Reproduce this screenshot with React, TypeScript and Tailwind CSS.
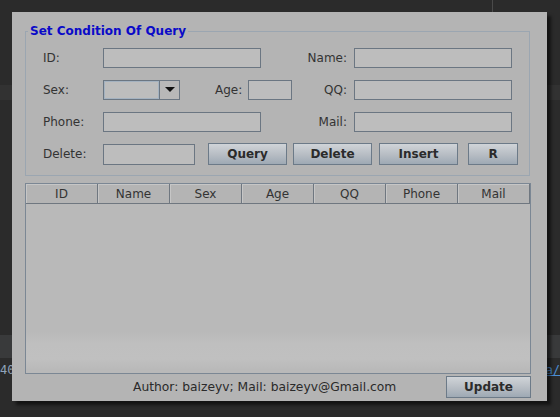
import React from "react";

// Swing-style "Set Condition Of Query" dialog over a dark IDE background

const labelCls = "text-[12px] text-[#333] font-['DejaVu_Sans',sans-serif]";
const fieldCls = "h-[20px] bg-[#bdbdbd] border border-[#6b7682] shrink-0";
const btnCls =
  "h-[22px] shrink-0 border border-[#6c7a88] bg-[linear-gradient(to_bottom,#d0d4d8,#b6bcc3_55%,#9ea9b4)] text-[12px] font-bold text-[#2b2b2b] font-['DejaVu_Sans',sans-serif] flex items-center justify-center";

function Field({ w }: { w: string }) {
  return <div className={`${fieldCls} ${w}`} />;
}

function Combo() {
  return (
    <div className="flex h-[20px] w-[77px] shrink-0 border border-[#6b7682] bg-[#bdbdbd]">
      <div className="flex-1 border border-[#a4b2c0]" />
      <div className="w-[20px] border-l border-[#6b7682] bg-[#b8b8b8] flex items-center justify-center">
        <svg width="10" height="6" viewBox="0 0 10 6">
          <path d="M0 0h10L5 5z" fill="#111" />
        </svg>
      </div>
    </div>
  );
}

const columns = ["ID", "Name", "Sex", "Age", "QQ", "Phone", "Mail"];

function Dialog() {
  return (
    <div className="absolute left-[12px] top-[12px] w-[535px] h-[389px] bg-[#b4b4b4] shadow-[4px_4px_3px_rgba(0,0,0,0.55)] pl-[13px] pt-[19px] flex flex-col">
      {/* condition group */}
      <div className="relative w-[505px] h-[145px] border border-[#9ba6b1] pt-[16px] pl-[17px] pr-[17px] flex flex-col">
        <span className="absolute -top-[9px] left-[2px] px-[2px] bg-[#b4b4b4] text-[12px] leading-[16px] font-bold text-[#0a0ac8] font-['DejaVu_Sans',sans-serif]">
          Set Condition Of Query
        </span>

        <div className="flex items-center h-[20px]">
          <span className={`${labelCls} w-[60px] shrink-0`}>ID:</span>
          <Field w="w-[158px]" />
          <span className={`${labelCls} flex-1 text-right pr-[7px]`}>Name:</span>
          <Field w="w-[158px]" />
        </div>

        <div className="flex items-center h-[20px] mt-[12px]">
          <span className={`${labelCls} w-[60px] shrink-0`}>Sex:</span>
          <Combo />
          <span className={`${labelCls} ml-[35px] w-[33px] shrink-0`}>Age:</span>
          <Field w="w-[44px]" />
          <span className={`${labelCls} flex-1 text-right pr-[7px]`}>QQ:</span>
          <Field w="w-[158px]" />
        </div>

        <div className="flex items-center h-[20px] mt-[12px]">
          <span className={`${labelCls} w-[60px] shrink-0`}>Phone:</span>
          <Field w="w-[158px]" />
          <span className={`${labelCls} flex-1 text-right pr-[7px]`}>Mail:</span>
          <Field w="w-[158px]" />
        </div>

        <div className="flex items-center h-[22px] mt-[11px]">
          <span className={`${labelCls} w-[60px] shrink-0`}>Delete:</span>
          <div className={`${fieldCls} w-[92px] h-[21px]`} />
          <button className={`${btnCls} w-[79px] ml-[13px]`}>Query</button>
          <button className={`${btnCls} w-[79px] ml-[6px]`}>Delete</button>
          <button className={`${btnCls} w-[79px] ml-[7px]`}>Insert</button>
          <button className={`${btnCls} w-[50px] ml-[10px]`}>R</button>
        </div>
      </div>

      {/* result table */}
      <div className="mt-[7px] w-[506px] h-[191px] border border-[#7b8794] flex flex-col">
        <div className="flex h-[20px] shrink-0 border-b border-[#6f7780]">
          {columns.map((c) => (
            <div
              key={c}
              className={`w-[72px] shrink-0 border-r border-[#6f7780] shadow-[inset_1px_1px_0_#c6c6c6] bg-[#b4b4b4] flex items-center justify-center ${labelCls}`}
            >
              {c}
            </div>
          ))}
        </div>
        <div className="flex-1 bg-[linear-gradient(to_bottom,#b9b9b9_0,#b9b9b9_128px,#bfbfbf_140px,#c0c0c0_155px,#b9b9b9_166px)]" />
      </div>

      {/* footer */}
      <div className="flex items-center mt-[3px] h-[20px]">
        <span className="ml-[108px] text-[12.3px] text-[#2a2a2a] font-['DejaVu_Sans',sans-serif]">
          Author: baizeyv; Mail: baizeyv@Gmail.com
        </span>
        <button className={`${btnCls} h-[20px] w-[85px] ml-auto mr-[16px]`}>Update</button>
      </div>
    </div>
  );
}

export default function App() {
  return (
    <div className="relative w-[560px] h-[417px] overflow-hidden bg-[#2b2b2b]">
      {/* background window content */}
      <div className="flex flex-col h-full">
        <div className="h-[85px] flex">
          <div className="ml-[492px] w-px h-[12px] bg-[#4a4a4a]" />
        </div>
        <div className="h-[15px] bg-[#323232]" />
        <div className="h-[235px]" />
        <div className="h-[23px] bg-[#393a3b]" />
        <div className="flex items-end justify-between h-[19px] text-[12px] leading-[14px] font-['DejaVu_Sans_Mono',monospace]">
          <span className="text-[#8fa3bb]">40</span>
          <span className="text-[#4b8fd6] underline">a/</span>
        </div>
      </div>
      <Dialog />
    </div>
  );
}
